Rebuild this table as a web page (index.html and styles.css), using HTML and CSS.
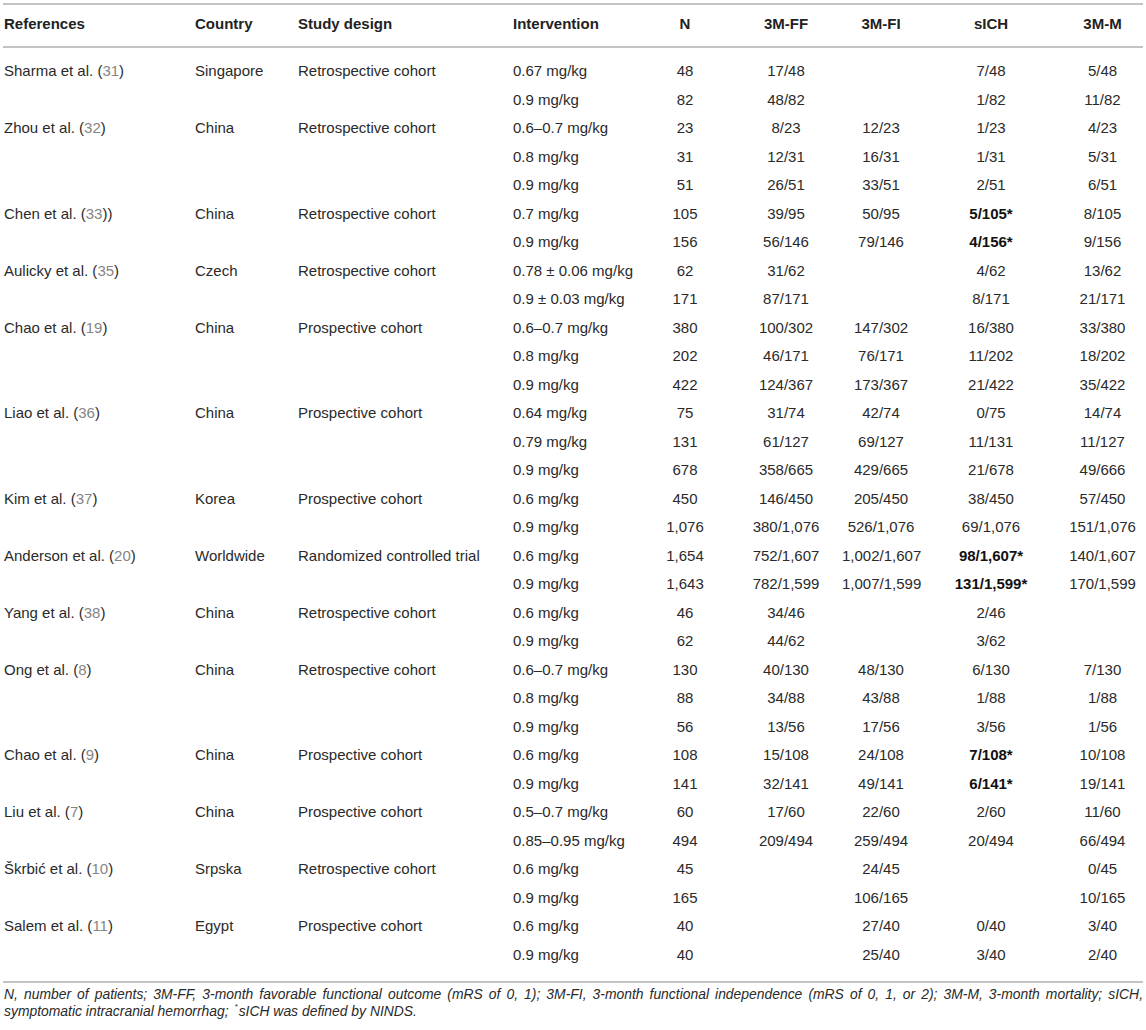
FILE: index.html
```html
<!DOCTYPE html>
<html lang="en">
<head>
<meta charset="utf-8">
<title>Table</title>
<link rel="stylesheet" href="styles.css">
</head>
<body>
<div class="wrap">
<table class="tbl">
<colgroup>
<col class="c-ref"><col class="c-country"><col class="c-design"><col class="c-int"><col class="c-n"><col class="c-ff"><col class="c-fi"><col class="c-sich"><col class="c-m">
</colgroup>
<thead>
<tr><th class="l">References</th><th class="l">Country</th><th class="l">Study design</th><th class="l">Intervention</th><th>N</th><th>3M-FF</th><th>3M-FI</th><th>sICH</th><th>3M-M</th></tr>
</thead>
<tbody>
<tr class="first"><td class="l">Sharma et al. (<span class="cite">31</span>)</td><td class="l">Singapore</td><td class="l">Retrospective cohort</td><td class="l">0.67 mg/kg</td><td>48</td><td>17/48</td><td></td><td>7/48</td><td>5/48</td></tr>
<tr><td class="l"></td><td class="l"></td><td class="l"></td><td class="l">0.9 mg/kg</td><td>82</td><td>48/82</td><td></td><td>1/82</td><td>11/82</td></tr>
<tr><td class="l">Zhou et al. (<span class="cite">32</span>)</td><td class="l">China</td><td class="l">Retrospective cohort</td><td class="l">0.6–0.7 mg/kg</td><td>23</td><td>8/23</td><td>12/23</td><td>1/23</td><td>4/23</td></tr>
<tr><td class="l"></td><td class="l"></td><td class="l"></td><td class="l">0.8 mg/kg</td><td>31</td><td>12/31</td><td>16/31</td><td>1/31</td><td>5/31</td></tr>
<tr><td class="l"></td><td class="l"></td><td class="l"></td><td class="l">0.9 mg/kg</td><td>51</td><td>26/51</td><td>33/51</td><td>2/51</td><td>6/51</td></tr>
<tr><td class="l">Chen et al. (<span class="cite">33</span>))</td><td class="l">China</td><td class="l">Retrospective cohort</td><td class="l">0.7 mg/kg</td><td>105</td><td>39/95</td><td>50/95</td><td><b>5/105*</b></td><td>8/105</td></tr>
<tr><td class="l"></td><td class="l"></td><td class="l"></td><td class="l">0.9 mg/kg</td><td>156</td><td>56/146</td><td>79/146</td><td><b>4/156*</b></td><td>9/156</td></tr>
<tr><td class="l">Aulicky et al. (<span class="cite">35</span>)</td><td class="l">Czech</td><td class="l">Retrospective cohort</td><td class="l">0.78 ± 0.06 mg/kg</td><td>62</td><td>31/62</td><td></td><td>4/62</td><td>13/62</td></tr>
<tr><td class="l"></td><td class="l"></td><td class="l"></td><td class="l">0.9 ± 0.03 mg/kg</td><td>171</td><td>87/171</td><td></td><td>8/171</td><td>21/171</td></tr>
<tr><td class="l">Chao et al. (<span class="cite">19</span>)</td><td class="l">China</td><td class="l">Prospective cohort</td><td class="l">0.6–0.7 mg/kg</td><td>380</td><td>100/302</td><td>147/302</td><td>16/380</td><td>33/380</td></tr>
<tr><td class="l"></td><td class="l"></td><td class="l"></td><td class="l">0.8 mg/kg</td><td>202</td><td>46/171</td><td>76/171</td><td>11/202</td><td>18/202</td></tr>
<tr><td class="l"></td><td class="l"></td><td class="l"></td><td class="l">0.9 mg/kg</td><td>422</td><td>124/367</td><td>173/367</td><td>21/422</td><td>35/422</td></tr>
<tr><td class="l">Liao et al. (<span class="cite">36</span>)</td><td class="l">China</td><td class="l">Prospective cohort</td><td class="l">0.64 mg/kg</td><td>75</td><td>31/74</td><td>42/74</td><td>0/75</td><td>14/74</td></tr>
<tr><td class="l"></td><td class="l"></td><td class="l"></td><td class="l">0.79 mg/kg</td><td>131</td><td>61/127</td><td>69/127</td><td>11/131</td><td>11/127</td></tr>
<tr><td class="l"></td><td class="l"></td><td class="l"></td><td class="l">0.9 mg/kg</td><td>678</td><td>358/665</td><td>429/665</td><td>21/678</td><td>49/666</td></tr>
<tr><td class="l">Kim et al. (<span class="cite">37</span>)</td><td class="l">Korea</td><td class="l">Prospective cohort</td><td class="l">0.6 mg/kg</td><td>450</td><td>146/450</td><td>205/450</td><td>38/450</td><td>57/450</td></tr>
<tr><td class="l"></td><td class="l"></td><td class="l"></td><td class="l">0.9 mg/kg</td><td>1,076</td><td>380/1,076</td><td>526/1,076</td><td>69/1,076</td><td>151/1,076</td></tr>
<tr><td class="l">Anderson et al. (<span class="cite">20</span>)</td><td class="l">Worldwide</td><td class="l">Randomized controlled trial</td><td class="l">0.6 mg/kg</td><td>1,654</td><td>752/1,607</td><td>1,002/1,607</td><td><b>98/1,607*</b></td><td>140/1,607</td></tr>
<tr><td class="l"></td><td class="l"></td><td class="l"></td><td class="l">0.9 mg/kg</td><td>1,643</td><td>782/1,599</td><td>1,007/1,599</td><td><b>131/1,599*</b></td><td>170/1,599</td></tr>
<tr><td class="l">Yang et al. (<span class="cite">38</span>)</td><td class="l">China</td><td class="l">Retrospective cohort</td><td class="l">0.6 mg/kg</td><td>46</td><td>34/46</td><td></td><td>2/46</td><td></td></tr>
<tr><td class="l"></td><td class="l"></td><td class="l"></td><td class="l">0.9 mg/kg</td><td>62</td><td>44/62</td><td></td><td>3/62</td><td></td></tr>
<tr><td class="l">Ong et al. (<span class="cite">8</span>)</td><td class="l">China</td><td class="l">Retrospective cohort</td><td class="l">0.6–0.7 mg/kg</td><td>130</td><td>40/130</td><td>48/130</td><td>6/130</td><td>7/130</td></tr>
<tr><td class="l"></td><td class="l"></td><td class="l"></td><td class="l">0.8 mg/kg</td><td>88</td><td>34/88</td><td>43/88</td><td>1/88</td><td>1/88</td></tr>
<tr><td class="l"></td><td class="l"></td><td class="l"></td><td class="l">0.9 mg/kg</td><td>56</td><td>13/56</td><td>17/56</td><td>3/56</td><td>1/56</td></tr>
<tr><td class="l">Chao et al. (<span class="cite">9</span>)</td><td class="l">China</td><td class="l">Prospective cohort</td><td class="l">0.6 mg/kg</td><td>108</td><td>15/108</td><td>24/108</td><td><b>7/108*</b></td><td>10/108</td></tr>
<tr><td class="l"></td><td class="l"></td><td class="l"></td><td class="l">0.9 mg/kg</td><td>141</td><td>32/141</td><td>49/141</td><td><b>6/141*</b></td><td>19/141</td></tr>
<tr><td class="l">Liu et al. (<span class="cite">7</span>)</td><td class="l">China</td><td class="l">Prospective cohort</td><td class="l">0.5–0.7 mg/kg</td><td>60</td><td>17/60</td><td>22/60</td><td>2/60</td><td>11/60</td></tr>
<tr><td class="l"></td><td class="l"></td><td class="l"></td><td class="l">0.85–0.95 mg/kg</td><td>494</td><td>209/494</td><td>259/494</td><td>20/494</td><td>66/494</td></tr>
<tr><td class="l">Škrbić et al. (<span class="cite">10</span>)</td><td class="l">Srpska</td><td class="l">Retrospective cohort</td><td class="l">0.6 mg/kg</td><td>45</td><td></td><td>24/45</td><td></td><td>0/45</td></tr>
<tr><td class="l"></td><td class="l"></td><td class="l"></td><td class="l">0.9 mg/kg</td><td>165</td><td></td><td>106/165</td><td></td><td>10/165</td></tr>
<tr><td class="l">Salem et al. (<span class="cite">11</span>)</td><td class="l">Egypt</td><td class="l">Prospective cohort</td><td class="l">0.6 mg/kg</td><td>40</td><td></td><td>27/40</td><td>0/40</td><td>3/40</td></tr>
<tr class="last"><td class="l"></td><td class="l"></td><td class="l"></td><td class="l">0.9 mg/kg</td><td>40</td><td></td><td>25/40</td><td>3/40</td><td>2/40</td></tr>
</tbody>
</table>
<p class="note">N, number of patients; 3M-FF, 3-month favorable functional outcome (mRS of 0, 1); 3M-FI, 3-month functional independence (mRS of 0, 1, or 2); 3M-M, 3-month mortality; sICH, symptomatic intracranial hemorrhag; <span class="ast">*</span>sICH was defined by NINDS.</p>
</div>
</body>
</html>
```
FILE: styles.css
```css
html, body {
  margin: 0;
  padding: 0;
  background: #ffffff;
}
body {
  font-family: "Liberation Sans", Arial, Helvetica, sans-serif;
  color: #2a2a2a;
}
.wrap {
  width: 1140px;
  margin: 3px 0 0 3px;
}
.tbl {
  width: 1140px;
  table-layout: fixed;
  border-collapse: collapse;
  font-size: 15px;
  line-height: 18px;
}
.c-ref { width: 192px; }
.c-country { width: 103px; }
.c-design { width: 215px; }
.c-int { width: 127px; }
.c-n { width: 90px; }
.c-ff { width: 112px; }
.c-fi { width: 78px; }
.c-sich { width: 142px; }
.c-m { width: 81px; }

.tbl thead th {
  font-weight: bold;
  color: #222;
  text-align: center;
  padding: 10px 0 13px 0;
  border-top: 2px solid #c4c4c4;
  border-bottom: 2px solid #c4c4c4;
  white-space: nowrap;
}
.tbl td {
  text-align: center;
  padding: 5.25px 0;
  white-space: nowrap;
}
.tbl .l {
  text-align: left;
}
.tbl th.l:first-child,
.tbl td.l:first-child {
  padding-left: 1px;
}
.tbl tr.first td {
  padding-top: 14px;
}
.tbl tr.last td {
  padding-bottom: 17.5px;
}
.tbl tbody {
  border-bottom: 2px solid #c4c4c4;
}
.tbl b {
  font-weight: bold;
  color: #111;
}
.cite {
  color: #858585;
}
.note {
  margin: 3px 0 0 0;
  padding-left: 1px;
  font-size: 13.9px;
  line-height: 17px;
  font-style: italic;
  color: #2a2a2a;
  text-align: justify;
}
.note .ast {
  display: inline-block;
  font-size: 8px;
  line-height: 8px;
  vertical-align: top;
  padding: 0 1px 0 2px;
}
```
